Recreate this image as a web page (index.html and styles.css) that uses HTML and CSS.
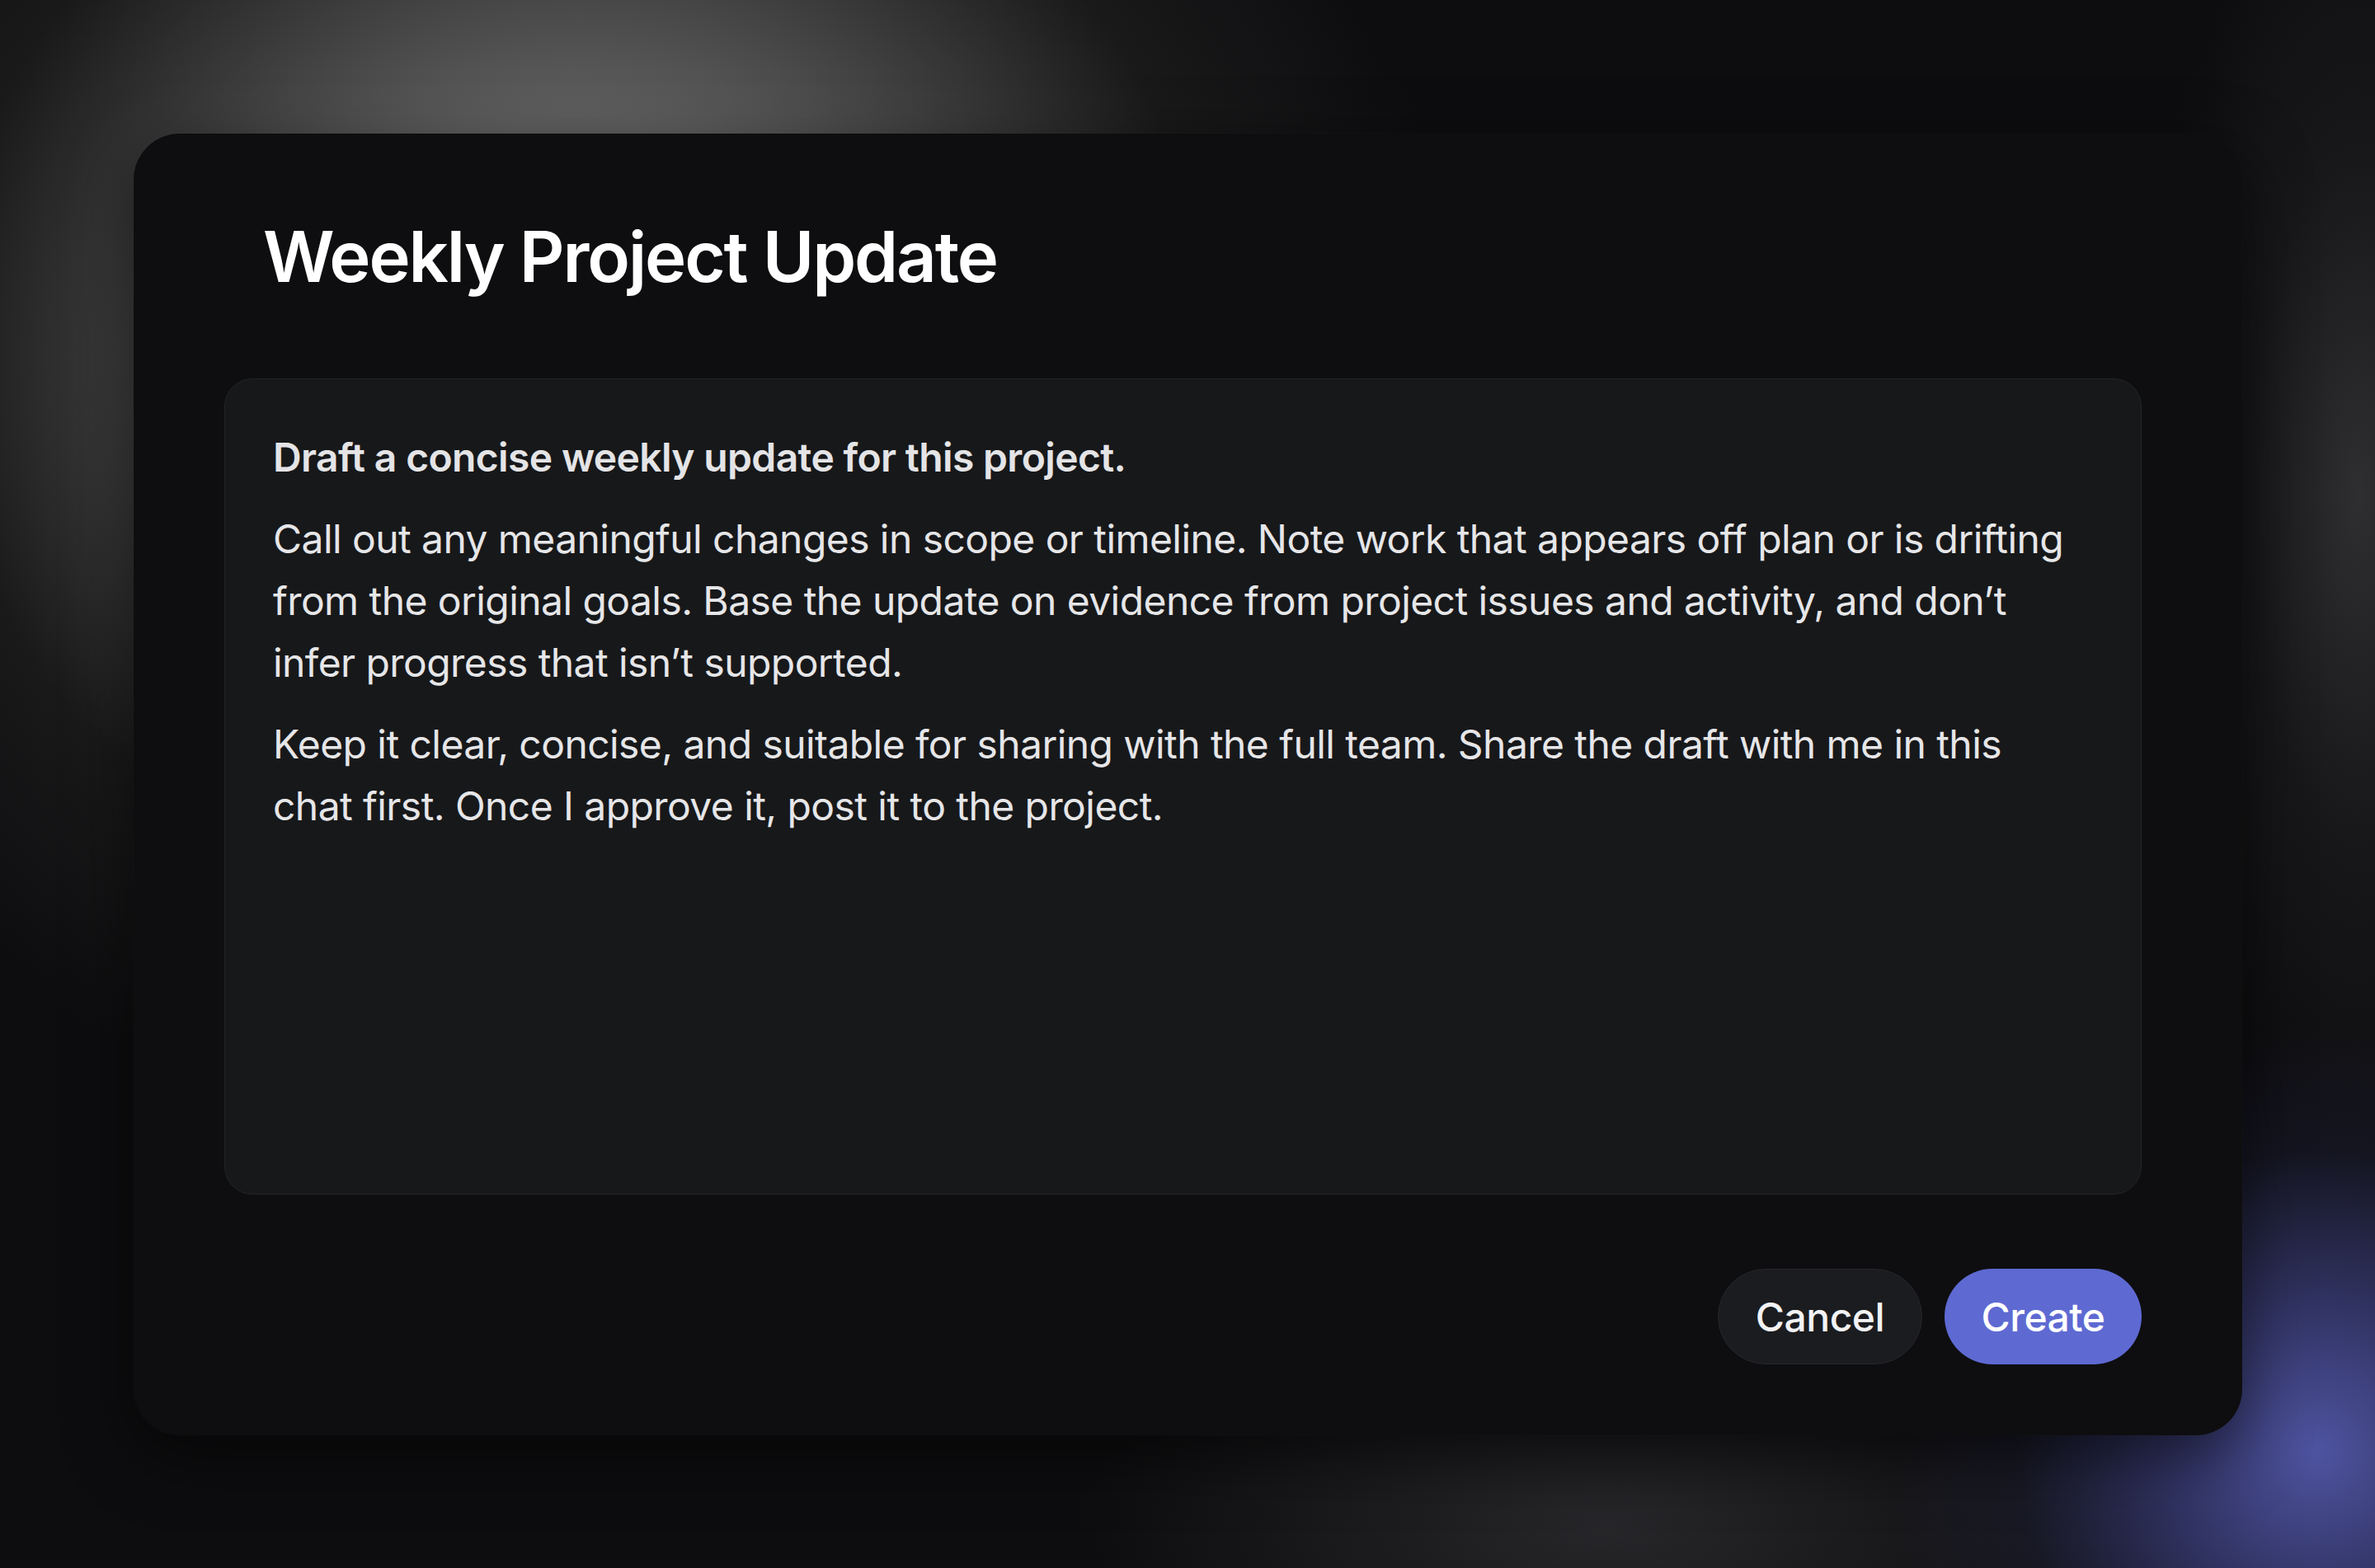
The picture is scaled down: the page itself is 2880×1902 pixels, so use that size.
FILE: index.html
```html
<!DOCTYPE html>
<html lang="en">
<head>
<meta charset="utf-8">
<title>Weekly Project Update</title>
<link rel="stylesheet" href="styles.css">
</head>
<body>
  <div class="stage">
    <section class="dialog" role="dialog" aria-labelledby="dlg-title">
      <h1 class="dialog-title" id="dlg-title">Weekly Project Update</h1>
      <div class="prompt-box">
        <p class="prompt-lead">Draft a concise weekly update for this project.</p>
        <p class="prompt-text">Call out any meaningful changes in scope or timeline. Note work that appears off plan or is drifting from the original goals. Base the update on evidence from project issues and activity, and don’t infer progress that isn’t supported.</p>
        <p class="prompt-text">Keep it clear, concise, and suitable for sharing with the full team. Share the draft with me in this chat first. Once I approve it, post it to the project.</p>
      </div>
      <div class="dialog-actions">
        <button class="btn btn-secondary" type="button">Cancel</button>
        <button class="btn btn-primary" type="button">Create</button>
      </div>
    </section>
  </div>
</body>
</html>
```

FILE: styles.css
```css
* {
  box-sizing: border-box;
}

html,
body {
  margin: 0;
  padding: 0;
}

body {
  width: 2880px;
  height: 1902px;
  overflow: hidden;
  font-family: "Inter", "Noto Sans", "Liberation Sans", sans-serif;
  background-color: #0d0d0f;
  background-image:
    radial-gradient(ellipse 520px 520px at 2810px 1760px, rgba(90, 96, 186, 0.85) 0%, rgba(72, 76, 152, 0.6) 35%, rgba(42, 44, 84, 0.25) 70%, rgba(13, 13, 15, 0) 100%),
    radial-gradient(ellipse 640px 280px at 1950px 1850px, rgba(50, 50, 54, 0.7) 0%, rgba(13, 13, 15, 0) 100%),
    radial-gradient(ellipse 260px 820px at 2860px 600px, rgba(58, 58, 60, 0.75) 0%, rgba(40, 40, 42, 0.4) 50%, rgba(13, 13, 15, 0) 100%),
    radial-gradient(ellipse 1250px 1150px at 700px 430px, rgba(112, 112, 112, 1) 0%, rgba(100, 100, 100, 0.95) 25%, rgba(72, 72, 72, 0.75) 45%, rgba(40, 40, 40, 0.45) 62%, rgba(13, 13, 15, 0) 85%);
}

.stage {
  padding: 162px 161px 161px 162px;
}

.dialog {
  width: 2557px;
  height: 1579px;
  background: #0e0e10;
  border-radius: 56px;
  padding: 99px 122px 86px 110px;
  display: flex;
  flex-direction: column;
  box-shadow: 0 24px 80px rgba(0, 0, 0, 0.55), 0 0 0 1px rgba(255, 255, 255, 0.015);
}

.dialog-title {
  margin: 0 0 96px 47px;
  font-size: 85px;
  line-height: 102px;
  font-weight: 600;
  letter-spacing: -0.025em;
  color: #ffffff;
}

.prompt-box {
  height: 990px;
  background: #17181a;
  border: 1.5px solid #232427;
  border-radius: 34px;
  padding: 57px 80px 57px 58px;
  color: #e6e6e8;
  font-size: 48px;
  line-height: 75px;
}

.prompt-box p {
  margin: 0 0 24px 0;
}

.prompt-lead {
  font-weight: 600;
  letter-spacing: -0.65px;
  color: #e4e4e6;
}

.prompt-text {
  font-weight: 400;
  letter-spacing: -0.57px;
}

.dialog-actions {
  margin-top: 90px;
  display: flex;
  justify-content: flex-end;
  gap: 27px;
}

.btn {
  height: 116px;
  border-radius: 58px;
  font-family: inherit;
  font-size: 48px;
  font-weight: 500;
  letter-spacing: -0.5px;
  color: #f2f2f4;
  cursor: pointer;
  display: flex;
  align-items: center;
  justify-content: center;
}

.btn-secondary {
  width: 248px;
  background: #1b1c1f;
  border: 1.5px solid #26272b;
}

.btn-primary {
  width: 239px;
  background: #5e6ad2;
  border: none;
  color: #ffffff;
}
```
